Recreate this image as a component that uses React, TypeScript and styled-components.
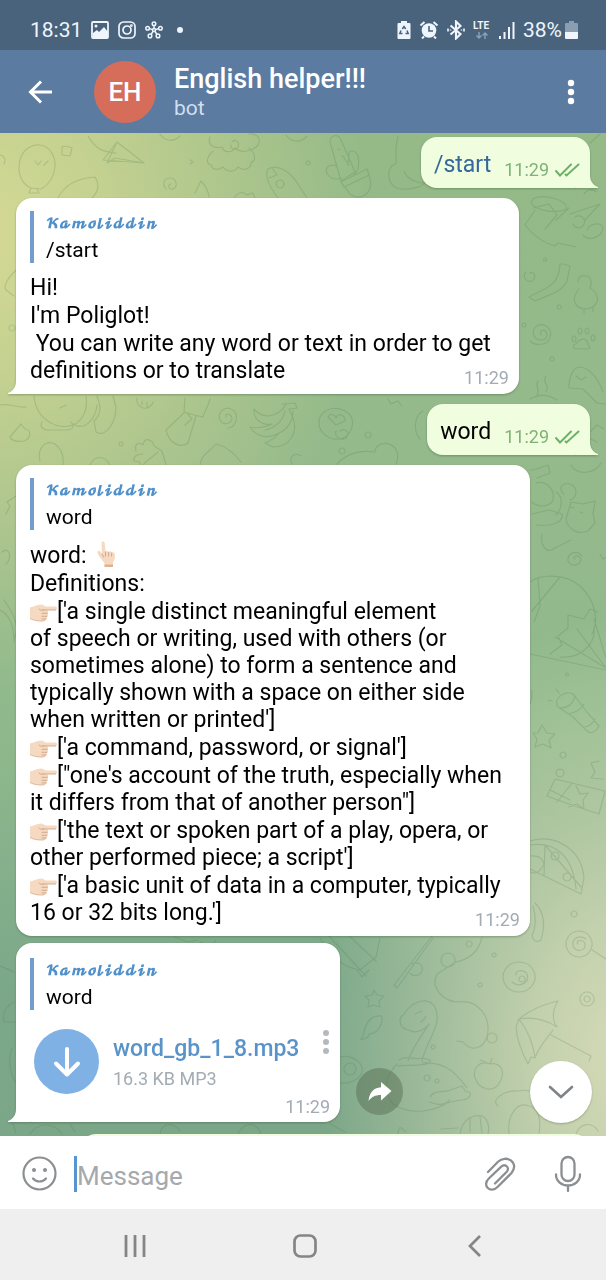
import React from "react";
import styled, { createGlobalStyle } from "styled-components";

const GlobalStyle = createGlobalStyle`
  *, *::before, *::after { box-sizing: border-box; }
  body { margin: 0; font-family: Roboto, "Liberation Sans", sans-serif; }
  p, h1, ul { margin: 0; padding: 0; font-weight: 400; }
  ul { list-style: none; }
  button { border: 0; padding: 0; background: none; color: inherit; font: inherit; cursor: pointer; }
  svg { display: block; flex: none; }
`;

const Screen = styled.div`
  display: flex;
  flex-direction: column;
  height: 100vh;
  overflow: hidden;
`;

/* ---------- status bar ---------- */

const StatusBar = styled.div`
  flex: none;
  display: flex;
  align-items: center;
  justify-content: space-between;
  height: 50px;
  padding: 10px 28px 0 30px;
  background: #4a637d;
  color: #eef5fc;
  font-size: 21px;
  line-height: 26px;
`;

const StatusGroup = styled.div<{ $gap: number }>`
  display: flex;
  align-items: center;
  gap: ${(p) => p.$gap}px;
`;

/* ---------- header ---------- */

const Header = styled.header`
  flex: none;
  display: flex;
  align-items: center;
  height: 83px;
  padding: 0 28px 0 26px;
  background: #5b7ba1;
  color: #fff;
`;

const IconButton = styled.button`
  display: flex;
  align-items: center;
  justify-content: center;
`;

const Avatar = styled.div`
  display: flex;
  align-items: center;
  justify-content: center;
  width: 62px;
  height: 62px;
  margin: 0 18px 0 40px;
  border-radius: 50%;
  background: #d66d5a;
  font-size: 26px;
  font-weight: 500;
`;

const Peer = styled.div`
  flex: 1;
  min-width: 0;
`;

const PeerName = styled.h1`
  font-size: 27px;
  line-height: 32px;
  font-weight: 500;
`;

const PeerStatus = styled.p`
  font-size: 21px;
  line-height: 26px;
  color: #cfdff2;
`;

/* ---------- chat ---------- */

const Chat = styled.main`
  position: relative;
  flex: 1;
  min-height: 0;
  background:
    radial-gradient(ellipse 380px 460px at -2% 10%, #d4d994 0%, rgba(206, 214, 146, 0.85) 28%, rgba(190, 207, 143, 0) 100%),
    radial-gradient(ellipse 310px 440px at 104% 92%, #d6dab7 0%, rgba(208, 216, 180, 0.85) 30%, rgba(190, 205, 165, 0) 100%),
    linear-gradient(to bottom, #95ba88 0%, #94b98c 40%, #8fb98c 60%, #7ca88a 85%, #7ba688 100%);
`;

const Wallpaper = styled.svg`
  position: absolute;
  inset: 0;
  width: 100%;
  height: 100%;
  fill: none;
  stroke: #4d7a50;
  stroke-width: 1.2;
  stroke-linecap: round;
  stroke-linejoin: round;
  opacity: 0.22;
`;

const Messages = styled.div`
  position: relative;
  display: flex;
  flex-direction: column;
  gap: 10px;
  height: 100%;
  padding: 4px 16px 0;
  overflow: hidden auto;
  scrollbar-width: none;
`;

const Group = styled.div`
  display: flex;
  flex-direction: column;
  gap: 7px;
`;

const MessageRow = styled.div<{ $out?: boolean }>`
  flex: none;
  display: flex;
  align-items: flex-end;
  justify-content: ${(p) => (p.$out ? "flex-end" : "flex-start")};
  gap: 16px;
`;

const Bubble = styled.article<{ $out?: boolean }>`
  position: relative;
  padding: ${(p) => (p.$out ? "12px 10px 10px 13px" : "13px 10px 6px 14px")};
  border-radius: 16px;
  background: ${(p) => (p.$out ? "#f0fddf" : "#fff")};
  filter: drop-shadow(0 1px 1px rgba(50, 85, 50, 0.4));
  color: #000;
  font-size: 23px;
  line-height: 27px;
  white-space: nowrap;
`;

const TailBox = styled.svg<{ $out?: boolean }>`
  position: absolute;
  bottom: 0;
  ${(p) => (p.$out ? "right: -8px; transform: scaleX(-1);" : "left: -8px;")}
  fill: ${(p) => (p.$out ? "#f0fddf" : "#fff")};
`;

const OutContent = styled.div`
  display: flex;
  align-items: flex-end;
  gap: 13px;
  height: 29px;
`;

const Command = styled.a`
  color: #35699a;
  text-decoration: none;
`;

const Meta = styled.span<{ $out?: boolean }>`
  display: flex;
  align-items: center;
  gap: 6px;
  height: 20px;
  font-size: 18px;
  line-height: 20px;
  color: ${(p) => (p.$out ? "#7fb277" : "#a3abb3")};
`;

const OutMeta = styled(Meta)`
  height: 16px;
`;

const Quote = styled.div`
  margin-bottom: 11px;
  padding-left: 12px;
  border-left: 4px solid #719cce;
  font-size: 21px;
  line-height: 26px;
`;

const QuoteName = styled.p`
  color: #4f8fca;
  font-family: "DejaVu Math TeX Gyre", "DejaVu Serif", serif;
  font-size: 12px;
  font-weight: 700;
`;

const Stack = styled.div`
  display: grid;
`;

const Lines = styled.ul`
  grid-area: 1 / 1;
  display: grid;
  gap: 1px;
  padding: 0 18px 4px 0;
  white-space: pre;
`;

const Line = styled.span`
  display: block;
  justify-self: start;
`;

const StackedMeta = styled(Meta)`
  grid-area: 1 / 1;
  align-self: end;
  justify-self: end;
`;

const Emoji = styled.svg`
  display: inline-block;
  vertical-align: -4px;
`;

/* ---------- audio attachment ---------- */

const AudioBubble = styled(Bubble)`
  width: 324px;
  padding: 15px 10px 5px 14px;
`;

const Audio = styled.div`
  display: flex;
  align-items: flex-start;
  padding-left: 4px;
  margin-top: 19px;
`;

const Download = styled(IconButton)`
  width: 65px;
  height: 65px;
  border-radius: 50%;
  background: #80b1e4;
`;

const AudioInfo = styled.div`
  flex: 1;
  padding: 6px 0 0 14px;
`;

const AudioTitle = styled.p`
  color: #5a93c8;
  font-size: 23px;
  line-height: 27px;
  font-weight: 500;
`;

const AudioSize = styled.p`
  margin-top: 6px;
  color: #a3abb3;
  font-size: 18px;
  line-height: 22px;
`;

const AudioMeta = styled(Meta)`
  justify-content: flex-end;
  margin-top: 3px;
`;

const Forward = styled(IconButton)`
  width: 47px;
  height: 47px;
  margin-bottom: 7px;
  border-radius: 50%;
  background: rgba(88, 108, 84, 0.48);
`;

const Upcoming = styled.div`
  flex: none;
  width: 510px;
  height: 51px;
  margin-top: 2px;
  align-self: flex-end;
  border-radius: 16px;
  background: #f0fddf;
`;

const ScrollDown = styled(IconButton)`
  position: absolute;
  right: 14px;
  bottom: 13px;
  width: 62px;
  height: 62px;
  border-radius: 50%;
  background: #fff;
  box-shadow: 0 1px 2px rgba(80, 100, 70, 0.4);
`;

/* ---------- composer and system navigation ---------- */

const Composer = styled.form`
  flex: none;
  display: flex;
  align-items: center;
  height: 73px;
  padding: 2px 23px 0 22px;
  background: #fff;
`;

const Caret = styled.span`
  width: 3px;
  height: 36px;
  margin-left: 17px;
  background: #5794d2;
`;

const MessageInput = styled.input`
  flex: 1;
  min-width: 0;
  height: 40px;
  padding: 4px 0 0;
  border: 0;
  outline: 0;
  background: none;
  color: #000;
  font: 26px/32px Roboto, "Liberation Sans", sans-serif;
  &::placeholder { color: #a5a9ad; opacity: 1; }
`;

const Tools = styled.div`
  display: flex;
  align-items: center;
  gap: 35px;
`;

const SystemNav = styled.nav`
  flex: none;
  display: grid;
  grid-template-columns: repeat(3, 170px);
  justify-content: center;
  align-items: center;
  height: 71px;
  padding: 2px 0 0 4px;
  background: #efefef;
`;

/* ---------- drawings ---------- */

const Doodles = () => (
  <Wallpaper viewBox="0 133 606 1003" preserveAspectRatio="xMidYMid slice" aria-hidden="true">
    {/* balloon, paper plane, leaves */}
    <path d="M31 188c-10-4-14-16-11-28 3-11 12-16 20-15 10 1 16 12 15 22-1 11-7 18-14 22zM31 188l-2 5h10l-2-4M35 161l3 4 3-4M44 165l4-4" />
    <path d="M0 155c5 1 6 5 4 9M62 147c3-2 7 0 10 1l-2 8-8-1zM88 136c8 14 16 16 28 17M117 142l27 21-41-3zM117 142l-10 21 8-5 29 5" />
    <path d="M58 198c7-14 22-20 37-21 5 8 3 15-3 21M166 189c-4-5-2-11 4-11 7 0 8 9 3 11-4 1-6-4-2-5M195 193l6-12c4 4 7 8 8 16M160 134c5 8 14 8 20 2" />
    {/* cloud butterfly */}
    <path d="M210 137c-3 8 4 12 12 10 2 6 10 6 13 1 6 6 18 3 23-3 4-7-2-12-9-11M232 142c3-4 8 0 6 5-2 4-8 2-7-2M213 151c-6 6-8 12-2 14 2 6 8 5 12 2 5 6 12 5 15 0 6 5 14 1 13-5 6 0 4-10-2-14M190 160l3 2-3 2M308 161a2 2 0 1 0 .1 0" />
    {/* rocket */}
    <path d="M268 169c8-5 20 1 28 12l11 17M268 169c-4 8 2 18 10 29M272 168l5 7-8 3M280 180a4 4 0 1 0 .2 0M234 198c4-6 9-7 13-3l6-2 2 5" />
    {/* cactus */}
    <path d="M330 142c0-8 9-8 11-2l14 32-14 9zM344 158l4 5c2-6-1-12 4-12 8 0 9 17 2 24M337 166c-7-3-14 2-9 9 3 4 9 5 14 3M341 182l26-13 3 9c4 18-12 23-20 16zM341 182l3 5 25-12M338 149l2 1M342 156l2 1M347 164l2 1M286 135c6 8 15 8 21 1" />
    <path d="M398 136c-4 16-1 24-2 28-11 2-10 24 5 25 12 1 22-3 25-7M404 171c3 8 12 12 20 12" />
    {/* right strip */}
    <path d="M533 199c8-5 33-1 34 10-10 5-31 2-36-6l2-4M535 210l-10 15c8 10 18 18 30 21l3-3 18 4M533 208l16-4 8 11-12 14M556 220l13-12M570 214l30-10-15 16M587 230c4-8 16-8 16-1-2 8-14 13-20 6M573 224a6 6 0 1 0 2-7M600 134l-10 9M584 194c3-5 8-5 13-2" />
    <path d="M563 264l7 2-3 15c-5 11-17 13-32 20l-6-4c16-9 30-10 31-33zM530 273c4-3 7 5 2 8-6 2-10-5-6-9M578 282c0-6 4-7 9-6 5 2 5 8 3 12 7 4 10 11 5 17-6 6-18 5-20-3-2-5 1-9 4-13M584 309v4M593 308v4M545 258a1.600 1.600 0 1 0 .1 0M559 305a2 2 0 1 0 .1 0M524 323a2 2 0 1 0 .1 0M552 357a2 2 0 1 0 .1 0" />
    <path d="M541 335c-3-6 6-7 6 0 0 6-10 7-13 1-3-8 5-14 12-10 8 5 5 16-3 18-5 1-10 0-13-3M576 344c5-7 11-6 12 0l2 4c-5 3-10-1-14 1-4-1-3-5 0-5zM574 336a2 3 0 1 0 .1 0M580 328a2 3 0 1 0 .1 0M587 328a2 3 0 1 0 .1 0M593 335a2 3 0 1 0 .1 0M569 388c0-12 4-20 10-21 8 0 18 8 24 25M569 388l14 1 14 14 8 1M576 376l5 4 5-3M530 399c9-6 20-4 27 1M546 376c-5 8 5 8 0 15M538 381c-4 6 3 8-1 14M591 431l6-6 7 4M585 443l4-5 8 4M571 465c6 11 24 9 30-2" />
    {/* strip between messages */}
    <path d="M0 405c9-2 16 3 26 2M34 396c2 24 25 36 41 28 9-5 13-16 11-28M42 422c-3 5 2 9 8 8h16c7 0 9-4 5-8M73 424c12 8 23-6 24-19M97 396c5 12 3 20-3 25l2 11c11 6 20-11 20-25l-3-11M10 437l11-13 4 5c6 0 7 9-1 12-6 1-13 0-14-4M60 408l6-3M40 461c-3-12 5-22 15-17 8 6 9 13 8 21M90 465c4-10 15-10 20 0" />
    <path d="M137 398a8 8 0 1 0 16 4M142 401v4M147 402v5M121 442a2 2 0 1 0 .1 0M185 398l-1 14 10 3 9 2c2-7 5-10 7-18M184 413l-18 17c3 13 14 19 22 13l8-27M187 413l5 6-7 6M136 451c-2-8 3-9 7-6 1-9 10-5 11 1l8 5 4 14M143 454c-7 0-10 3-9 7l6 1v6l7-7 11-9M200 465c1-11 11-14 16-21 9 2 18 9 25 18M226 417c-2-4 5-4 6 1 0 6-9 8-12 2-3-7 4-14 11-11 9 4 6 18-3 19" />
    <path d="M282 404l13-1 2 5-8 1 4 9c5 14-2 29-20 29l-8-4c8-3 11-6 14-10-10 6-22 5-29-6 9 2 16 0 22-3-10 2-19-5-18-15 9 11 25 8 32-5zM279 433c8-3 14-12 14-22M265 430c10-2 18-9 20-19M320 417c5-9 17-11 25-6 13 7 7 24-2 27-12 5-28-6-23-21zM336 425l-8-8c2-5 7-2 8 1 3-6 9-3 9 3zM340 431c5-4 11 2 6 7-6 3-12-1-10-7M342 448a3 3 0 1 0 .1 0M368 432a3 3 0 1 0 .1 0M292 464c-4-8 4-12 9-8M337 464c11-12 24-14 38-12 0-11 19-12 22 0 1 4 1 8-1 12M423 411c-9 5-10 20-3 28M388 399l3 5 7-3 4 5" />
    {/* cat, parachute, torch */}
    <path d="M530 470c8 0 13-4 18-5l2 8-13 5M536 483c10-3 19 6 17 17-3 7-15 8-21 2M564 494c-8-7 1-13 8-9 6 4 5 13-2 15M556 492c8 5 6 17 0 23M570 507l4 1M580 512l3 1M571 502l12 2 12-3-2 13 2 9-7 8c-10 4-20-1-22-12zM532 514l17-4 13 4c2 8-10 13-26 11M542 534c-2 14 6 20 13 14l16-8M575 559c-4-2 3-6 6 0 0 6-9 9-13 2-1-8 9-12 14-5M600 554l3 5 4-2M538 578l2 28-6 16M530 582c8-7 34-10 50 4 14 13 20 33 12 48M560 577l-28 34M530 654l76 16M550 654l12-9-4-9 10-8v-13l16 4 6-10 8 3M594 619l12 39M577 629l29 39M555 637l51 31M560 657c22 2 36-14 34-30" />
    <path d="M557 705c-3-8 11-16 17-10l13 17 12 14c-4 7-9 8-12 5l-14-14-15-10zM560 708c8 0 13-4 15-12M568 714c8-1 13-5 16-10M585 727c5-1 8-4 10-8M532 690c0 6 0 10-2 14M538 733l4-8 5 8 8 1-6 6 2 8-8-4-8 3 2-8-4-6zM563 752a3 3 0 1 0 .1 0M559 693l-3-4M552 701l-4-1M567 673a1.500 1.500 0 1 0 .1 0M599 761l-8 2 4 9-4 6 12 1" />
    {/* card, pizza slice, fork */}
    <path d="M555 779l50 12-6 23c-18-6-34-11-52-18zM572 783l-15 19M550 790l20 10M576 786l4 8 8-1-5 7 1 9-7-5-8 3M560 769a4 4 0 1 0 .1 0M530 841c26-8 52 9 54 37l-3 16-51-25M530 845c24-4 43 10 46 44M545 845l-1 31M545 845l36 42M555 852a4 4 0 1 0 .1 0M567 873a4 4 0 1 0 .1 0M530 856c9-1 13 3 14 8-4 9-9 10-14 8M535 903c10 10 10 24 6 37-4 3-8 1-9-4 4-9 4-20 1-30M574 911a3 3 0 1 0 .1 0" />
    <path d="M320 938c8 15 22 30 40 32l16-13 4-19M329 936l37 40M347 934l29 27M357 970l5 7 7-7M432 936l-38 49 3 3 36-50M412 964c6-3 12 1 10 7-2 5-10 6-12 2M448 953a7 7 0 1 0 .1 0M482 937c-3 14-12 22-26 25l-19 12c-8 16 10 28 21 28 20-3 34 15 29 35-4 12-16 15-24 5l-6-1M469 941a3 3 0 1 0 .1 0M494 953a2 2 0 1 0 .1 0M480 983a2 2 0 1 0 .1 0" />
    <path d="M374 990l3 5 7 1-5 5 1 6-7-2-5 2 1-7-4-4 7-1zM519 962a16 15 0 1 0 .1 0M516 975c-2-4 7-7 11-1 3 9-8 14-15 8M522 976a3 3 0 1 0 .1 0M579 931a13 13 0 1 0 .1 0M578 944c-3-3 5-6 7 0 1 7-9 9-12 2-1-9 7-11 13-7M592 950l14 9M587 992a7 7 0 1 0 .1 0M587 996a3 3 0 1 0 .1 0" />
    {/* sea creature, fish, fruit, umbrella */}
    <path d="M404 1014c8-13 24-18 31-7 8 18-8 32-13 54M404 1014c-7 5-4 15 5 16 5 4 15 1 20-6-8 13-16 22-21 37M415 1014l7-3M421 1022c3-3 4-3 5-6M399 1060c8-6 16 1 23-2l8 2c3 8-30 4-32 6M397 1064c-12 12-15 28-4 40 18 12 44 8 57-4M422 1063c25-2 36 13 45 25M427 1075a3 3 0 1 0 .1 0M437 1079a2 2 0 1 0 .1 0M430 1097c5-8 15-4 20-7l12-4 4 6c8-2 4 8-4 8-14 1-21 8-32 2M363 1036l2-8c3-9 9-13 17-12 1 9-5 18-13 18-1 6-5 4-9 6zM433 1045a2 2 0 1 0 .1 0M340 1057c12-3 24 6 22 15-3 9-14 12-22 11M350 1063a6 6 0 1 0 .1 0M492 1033a5 5 0 1 0 .1 0M490 1064c-11-4-18 5-15 14 5 13 19 15 25 4 7-13-2-20-10-18zM480 1060l10 4 2-6" />
    <path d="M520 1018c12-9 24-14 38-17-6 9-6 20-1 26-14-9-26-10-38-8l-3 8c1 13 6 26 12 37l3-7 4 1c4-12 14-22 18-28M519 1019c9 12 13 22 16 38M551 1035l40 21-2 5M498 1106c-8-6 6-16 20-15 14-3 24 4 22 12M509 1134c-2-19 8-33 20-28 10 2 12 14 10 27M460 1134c2-14 12-20 22-18 5 2 8 10 6 18M470 1118v14M480 1117l2 16M441 1129l17-1M398 1134c1-11 4-5 8-2M576 1134c4-11 16-13 22-3" />
    {/* left edge and bottom strip */}
    <path d="M4 600c10 14 16 26 10 40M0 610c14 7 14 25 14 32M2 552c8-7 10 8 4 12M16 496l-9 6 3 4-4 8M12 325a3 3 0 1 0 .1 0M16 270c-8 8-13 16-10 20l8 6M0 966c6 2 10 5 14 6M14 1002c-8 4-12 10-10 20h12M12 1048c-4 10-3 24 4 35M12 1121l4 12M30 1134c8-12 24-12 32 0M70 1124l5 8M160 1134c2-12 14-12 20-3M238 1134c6-13 19-12 23 0M174 937l14 5 10-2M200 942c5 3 14 3 16-2M330 1124l15 8" />
  </Wallpaper>
);

const Tail = ({ out }: { out?: boolean }) => (
  <TailBox $out={out} width="22" height="18" viewBox="0 0 22 18" aria-hidden="true">
    <path d="M8 0v5c0 6-3 10-8 12v1h22V12z" />
  </TailBox>
);

const Checks = () => (
  <svg width="25" height="14" viewBox="0 0 25 14" fill="none" stroke="#6cb067" strokeWidth="1.900" strokeLinecap="round" aria-label="Read" role="img">
    <path d="M1 8l4 4.500L16 1.500M10.500 11.500l1 1L23.500 1.500" />
  </svg>
);

const PointRight = () => (
  <Emoji width="27" height="22" viewBox="0 0 27 22" role="img" aria-label="Pointing right">
    <path d="M0 6.500C4 6 7 3.500 11 3.500c2 0 3 1.500 5 2h9.500c2 0 2 3.500 0 3.500H17c1.500 1 1.500 2.600.4 3.300 1 .9.8 2.400-.4 3 .6 1 .2 2.300-1 2.600C15.500 19.400 14 20 12 20c-5 0-8-.5-12-2.500z" fill="#f5d9c0" />
    <path d="M25.500 9H12.500M17.400 12.300H12M17 15.300h-5M16 17.900h-4M9 8c1.500 1.800 3 1.600 4.500.8" fill="none" stroke="#cfa488" strokeWidth="0.900" strokeLinecap="round" />
    <path d="M0 17.500C4 19.500 7 20 12 20c2 0 3.500-.6 4-2.100" fill="none" stroke="#d9b295" strokeWidth="0.900" />
  </Emoji>
);

const PointUp = () => (
  <Emoji width="27" height="26" viewBox="-4 0 27 26" role="img" aria-label="Pointing up">
    <path d="M5.500 2c0-2 3-2 3.200 0l.8 9c.8-1.300 2.700-1.200 3.100 0 .9-1 2.600-.8 3 .5 1.100-.8 3 0 3.200 1.500.5 4-.3 6-1.800 8V25H8.500v-3C6 19.500 3 15 1.500 12c-.5-2 1.500-3 2.800-1.300L6 13z" fill="#f5d9c0" />
    <path d="M9.500 11v4M12.600 11.500V15M15.600 12v3.200M6 13l1.500 3" fill="none" stroke="#cfa488" strokeWidth="0.900" strokeLinecap="round" />
    <path d="M8.500 23.500H17V26H8.500z" fill="#deb394" />
  </Emoji>
);

const Dots = ({ color, size }: { color: string; size: number }) => (
  <svg width="8" height="26" viewBox="0 0 8 26" fill={color} aria-hidden="true">
    <circle cx="4" cy="4" r={size} />
    <circle cx="4" cy="13" r={size} />
    <circle cx="4" cy="22" r={size} />
  </svg>
);

const ReplyQuote = ({ text }: { text: string }) => (
  <Quote>
    <QuoteName>𝓚𝓪𝓶𝓸𝓵𝓲𝓭𝓭𝓲𝓷</QuoteName>
    <p>{text}</p>
  </Quote>
);

const OutMessage = ({ children }: { children: React.ReactNode }) => (
  <MessageRow $out>
    <Bubble $out>
      <Tail out />
      <OutContent>
        {children}
        <OutMeta $out>
          11:29 <Checks />
        </OutMeta>
      </OutContent>
    </Bubble>
  </MessageRow>
);

const greeting = [
  ["Hi!"],
  ["I'm Poliglot!"],
  [" You can write any word or text in order to get", "definitions or to translate"],
];

const definitions = [
  [
    "['a single distinct meaningful element",
    "of speech or writing, used with others (or",
    "sometimes alone) to form a sentence and",
    "typically shown with a space on either side",
    "when written or printed']",
  ],
  ["['a command, password, or signal']"],
  ["[\"one's account of the truth, especially when", "it differs from that of another person\"]"],
  ["['the text or spoken part of a play, opera, or", "other performed piece; a script']"],
  ["['a basic unit of data in a computer, typically", "16 or 32 bits long.']"],
];

const Paragraph = ({ lines, bullet }: { lines: string[]; bullet?: React.ReactNode }) => (
  <li>
    {lines.map((line, i) => (
      <Line key={line}>
        {i === 0 && bullet}
        {line}
      </Line>
    ))}
  </li>
);

export default function App() {
  return (
    <Screen>
      <GlobalStyle />
      <StatusBar>
        <StatusGroup $gap={9}>
          <span>18:31</span>
          <svg width="18" height="18" viewBox="0 0 18 18" fill="none" aria-hidden="true">
            <rect x="1" y="1" width="16" height="16" rx="1" stroke="#eef5fc" strokeWidth="1.800" />
            <path d="M2 12l4-3 2 2 5-5 4 5v6H2z" fill="#eef5fc" />
            <circle cx="5" cy="5" r="1.500" fill="#eef5fc" />
          </svg>
          <svg width="18" height="18" viewBox="0 0 18 18" fill="none" stroke="#eef5fc" strokeWidth="1.700" aria-hidden="true">
            <rect x="1" y="1" width="16" height="16" rx="4.500" />
            <circle cx="9" cy="9" r="4" />
            <circle cx="13.400" cy="4.600" r="0.600" />
          </svg>
          <svg width="18" height="18" viewBox="0 0 18 18" fill="none" stroke="#eef5fc" strokeWidth="1.500" aria-hidden="true">
            <path d="M9 9V4.500M9 9L4.200 7.600M9 9l4.800-1.400M9 9l-3 4.500M9 9l3 4.500" />
            <circle cx="9" cy="2.700" r="1.800" />
            <circle cx="2.600" cy="7.200" r="1.800" />
            <circle cx="15.400" cy="7.200" r="1.800" />
            <circle cx="5" cy="14.900" r="1.800" />
            <circle cx="13" cy="14.900" r="1.800" />
            <circle cx="9" cy="9" r="1.500" fill="#4a637d" />
          </svg>
          <svg width="18" height="18" viewBox="0 0 18 18" fill="#eef5fc" aria-hidden="true">
            <circle cx="8" cy="9" r="3" />
          </svg>
        </StatusGroup>
        <StatusGroup $gap={8}>
          <svg width="14" height="18" viewBox="0 0 14 18" aria-hidden="true">
            <path d="M4 0h6v2h2.500q1 0 1 1v14q0 1-1 1h-11q-1 0-1-1V3q0-1 1-1H4z" fill="#eef5fc" />
            <path d="M5.300 8L7 5.500 8.700 8M10 9.500l1.200 3H8.500M5.500 12.500H2.800L4 9.500" fill="none" stroke="#4a637d" strokeWidth="1.500" />
          </svg>
          <svg width="20" height="18" viewBox="0 0 20 18" aria-hidden="true">
            <circle cx="10" cy="9.500" r="7.300" fill="#eef5fc" />
            <path d="M1.500 4.500L5.500 1M18.500 4.500L14.500 1M5 15.500l-2 2M15 15.500l2 2" stroke="#eef5fc" strokeWidth="2" />
            <path d="M10 5v5h4" fill="none" stroke="#4a637d" strokeWidth="1.600" />
          </svg>
          <svg width="18" height="20" viewBox="0 0 18 20" fill="none" stroke="#eef5fc" strokeWidth="2.100" aria-hidden="true">
            <path d="M3.500 5.500l10 8.500L9 18.500v-17L13.500 6l-10 8.500" />
            <path d="M1 8.500v3M3.500 9.500v1M14.500 9.500v1M17 8.500v3" strokeWidth="1.600" />
          </svg>
          <svg width="18" height="20" viewBox="0 0 18 20" aria-label="LTE" role="img">
            <text x="0" y="9" fill="#eef5fc" fontFamily="Roboto, sans-serif" fontSize="10" fontWeight="700">LTE</text>
            <path d="M6 12v6M3.500 15.500L6 18l2.500-2.500M12 19v-6M9.500 15.500L12 13l2.500 2.500" fill="none" stroke="#8ba0b6" strokeWidth="1.400" />
          </svg>
          <svg width="16" height="18" viewBox="0 0 16 18" fill="#eef5fc" aria-hidden="true">
            <path d="M0 15h2v3H0zM4.500 11h2v7h-2zM9 6h2v12H9zM13.500 1h2v17h-2z" />
          </svg>
          <StatusGroup $gap={3}>
            <span>38%</span>
            <svg width="13" height="18" viewBox="0 0 13 18" aria-hidden="true">
              <path d="M4 0h5v2h3q1 0 1 1v9H0V3q0-1 1-1h3z" fill="#8b9db1" />
              <path d="M0 11h13v6q0 1-1 1H1q-1 0-1-1z" fill="#eef5fc" />
            </svg>
          </StatusGroup>
        </StatusGroup>
      </StatusBar>

      <Header>
        <IconButton aria-label="Back">
          <svg width="28" height="28" viewBox="0 0 28 28" fill="none" stroke="#fff" strokeWidth="3" aria-hidden="true">
            <path d="M26 14H5M15 3.500L4.500 14 15 24.500" />
          </svg>
        </IconButton>
        <Avatar>EH</Avatar>
        <Peer>
          <PeerName>English helper!!!</PeerName>
          <PeerStatus>bot</PeerStatus>
        </Peer>
        <IconButton aria-label="More options">
          <svg width="28" height="26" viewBox="0 0 28 26" fill="#fff" aria-hidden="true">
            <circle cx="21" cy="4" r="3.200" />
            <circle cx="21" cy="13" r="3.200" />
            <circle cx="21" cy="22" r="3.200" />
          </svg>
        </IconButton>
      </Header>

      <Chat>
        <Doodles />
        <Messages>
          <OutMessage>
            <Command href="#start">/start</Command>
          </OutMessage>

          <MessageRow>
            <Bubble>
              <Tail />
              <ReplyQuote text="/start" />
              <Stack>
                <Lines>
                  {greeting.map((lines) => (
                    <Paragraph key={lines[0]} lines={lines} />
                  ))}
                </Lines>
                <StackedMeta>11:29</StackedMeta>
              </Stack>
            </Bubble>
          </MessageRow>

          <OutMessage>
            <span>word</span>
          </OutMessage>

          <Group>
            <MessageRow>
              <Bubble>
                <ReplyQuote text="word" />
                <Stack>
                  <Lines>
                    <li>
                      {"word: "}
                      <PointUp />
                    </li>
                    <li>Definitions:</li>
                    {definitions.map((lines) => (
                      <Paragraph key={lines[0]} lines={lines} bullet={<PointRight />} />
                    ))}
                  </Lines>
                  <StackedMeta>11:29</StackedMeta>
                </Stack>
              </Bubble>
            </MessageRow>

            <MessageRow>
              <AudioBubble>
                <Tail />
                <ReplyQuote text="word" />
                <Audio>
                  <Download aria-label="Download word_gb_1_8.mp3">
                    <svg width="30" height="32" viewBox="0 0 30 32" fill="none" stroke="#fff" strokeWidth="4" strokeLinecap="round" strokeLinejoin="round" aria-hidden="true">
                      <path d="M15 3v25M4 17.500L15 28.500l11-11" />
                    </svg>
                  </Download>
                  <AudioInfo>
                    <AudioTitle>word_gb_1_8.mp3</AudioTitle>
                    <AudioSize>16.3 KB MP3</AudioSize>
                  </AudioInfo>
                  <IconButton aria-label="File options">
                    <Dots color="#b5b9bd" size={3} />
                  </IconButton>
                </Audio>
                <AudioMeta>11:29</AudioMeta>
              </AudioBubble>
              <Forward aria-label="Forward">
                <svg width="24" height="20" viewBox="0 0 24 20" fill="#fff" aria-hidden="true">
                  <path d="M13 0l10.500 9L13 18.500V13C7 13 3.500 15 .5 19 1.200 11 5 6 13 5.200z" />
                </svg>
              </Forward>
            </MessageRow>
          </Group>

          <Upcoming />
        </Messages>
        <ScrollDown aria-label="Scroll to bottom">
          <svg width="26" height="16" viewBox="0 0 26 16" fill="none" stroke="#7f8488" strokeWidth="2.600" strokeLinecap="round" aria-hidden="true">
            <path d="M2 3l11 10L24 3" />
          </svg>
        </ScrollDown>
      </Chat>

      <Composer onSubmit={(e) => e.preventDefault()}>
        <IconButton type="button" aria-label="Emoji">
          <svg width="35" height="35" viewBox="0 0 35 35" fill="none" stroke="#8c8f92" strokeWidth="2.200" strokeLinecap="round" aria-hidden="true">
            <circle cx="17.500" cy="17.500" r="16" />
            <path d="M11 22.500c3.500 4 9.500 4 13 0" />
            <circle cx="12" cy="14" r="1.300" fill="#8c8f92" strokeWidth="1.400" />
            <circle cx="23" cy="14" r="1.300" fill="#8c8f92" strokeWidth="1.400" />
          </svg>
        </IconButton>
        <Caret />
        <MessageInput aria-label="Message" placeholder="Message" />
        <Tools>
          <IconButton type="button" aria-label="Attach file">
            <svg width="34" height="36" viewBox="0 0 34 36" fill="none" stroke="#8c8f92" strokeWidth="2.300" strokeLinecap="round" aria-hidden="true">
              <path d="M4 16L14 5.800C22-2 36 6.500 27.500 17L13.500 31C6.500 38-2.500 29.500 4.800 22.500L17 10.800C21.500 7 26.500 12 22.500 16L11 27.500" />
            </svg>
          </IconButton>
          <IconButton type="button" aria-label="Record voice message">
            <svg width="30" height="38" viewBox="0 0 30 38" fill="none" stroke="#8c8f92" strokeWidth="2.300" strokeLinecap="round" aria-hidden="true">
              <rect x="8.500" y="2" width="13" height="24" rx="6.500" />
              <path d="M3 19.500c0 6.500 5 11 12 11s12-4.500 12-11M15 30.500V36" />
            </svg>
          </IconButton>
        </Tools>
      </Composer>

      <SystemNav aria-label="System">
        <IconButton aria-label="Recent apps">
          <svg width="26" height="26" viewBox="0 0 26 26" stroke="#858585" strokeWidth="2.800" aria-hidden="true">
            <path d="M4 2v22M13 2v22M22 2v22" />
          </svg>
        </IconButton>
        <IconButton aria-label="Home">
          <svg width="26" height="26" viewBox="0 0 26 26" fill="none" stroke="#858585" strokeWidth="2.700" aria-hidden="true">
            <rect x="2.500" y="2.500" width="21" height="21" rx="6" />
          </svg>
        </IconButton>
        <IconButton aria-label="Previous screen">
          <svg width="26" height="26" viewBox="0 0 26 26" fill="none" stroke="#858585" strokeWidth="2.700" aria-hidden="true">
            <path d="M18 3L8 13l10 10" />
          </svg>
        </IconButton>
      </SystemNav>
    </Screen>
  );
}
